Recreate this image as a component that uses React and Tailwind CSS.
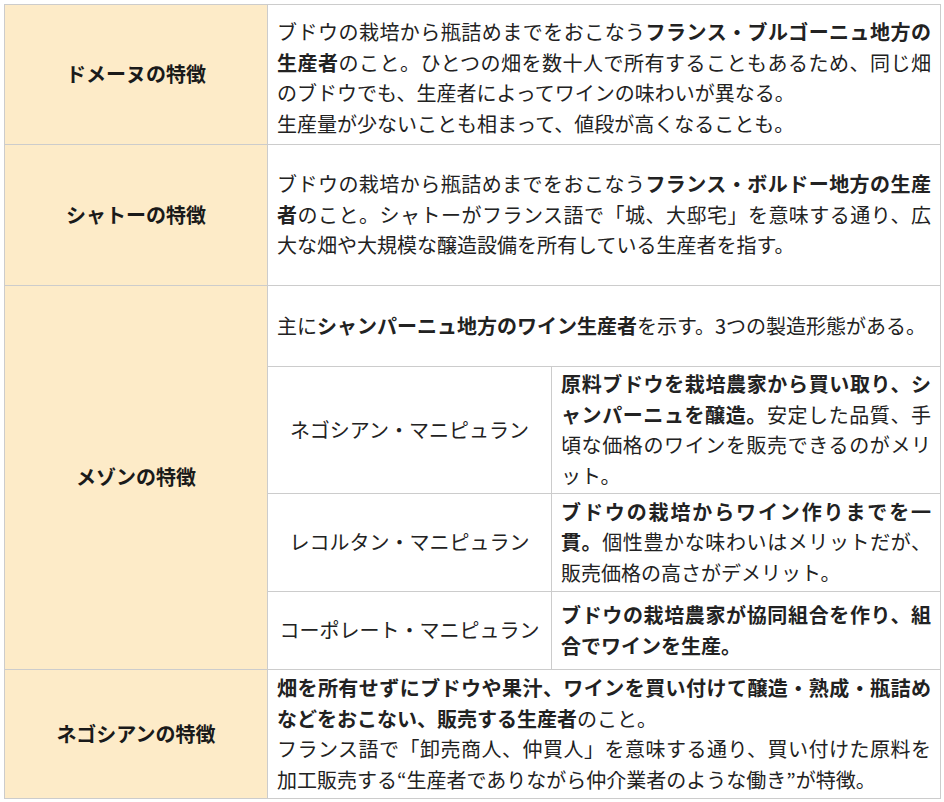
import React from 'react';

const font = { fontFamily: '"Noto Sans CJK JP", "Noto Sans", sans-serif' };

function Label({ children, rowSpan }) {
  return (
    <td
      rowSpan={rowSpan}
      className="border border-[#cccccc] bg-[#fdebc8] text-center align-middle font-bold text-[#1a1a1a]"
    >
      {children}
    </td>
  );
}

function Body({ children, colSpan = 2, center = false, extra = 'py-0.5' }) {
  return (
    <td
      colSpan={colSpan}
      className={`border border-[#cccccc] bg-white px-[9px] align-middle text-[#222222] ${extra} ${center ? 'text-center' : 'text-justify'}`}
    >
      {children}
    </td>
  );
}

export default function App() {
  return (
    <div className="min-h-screen bg-white p-1" style={font}>
      <table className="w-[936px] table-fixed border-collapse text-[20px] leading-[30.5px]">
        <colgroup>
          <col className="w-[263px]" />
          <col className="w-[284px]" />
          <col className="w-[389px]" />
        </colgroup>
        <tbody>
          <tr className="h-[140px]">
            <Label>ドメーヌの特徴</Label>
            <Body extra="pt-[7px] pb-0">
              ブドウの栽培から瓶詰めまでをおこなう<b>フランス・ブルゴーニュ地方の生産者</b>のこと。ひとつの畑を数十人で所有することもあるため、同じ畑のブドウでも、生産者によってワインの味わいが異なる。
              <br />
              生産量が少ないことも相まって、値段が高くなることも。
            </Body>
          </tr>
          <tr className="h-[141px]">
            <Label>シャトーの特徴</Label>
            <Body>
              ブドウの栽培から瓶詰めまでをおこなう<b>フランス・ボルドー地方の生産者</b>のこと。シャトーがフランス語で「城、大邸宅」を意味する通り、広大な畑や大規模な醸造設備を所有している生産者を指す。
            </Body>
          </tr>
          <tr className="h-[81px]">
            <Label rowSpan={4}>メゾンの特徴</Label>
            <Body>
              主に<b>シャンパーニュ地方のワイン生産者</b>を示す。3つの製造形態がある。
            </Body>
          </tr>
          <tr className="h-[126px]">
            <Body colSpan={1} center>ネゴシアン・マニピュラン</Body>
            <Body colSpan={1}>
              <b>原料ブドウを栽培農家から買い取り、シャンパーニュを醸造。</b>安定した品質、手頃な価格のワインを販売できるのがメリット。
            </Body>
          </tr>
          <tr className="h-[98px]">
            <Body colSpan={1} center>レコルタン・マニピュラン</Body>
            <Body colSpan={1}>
              <b>ブドウの栽培からワイン作りまでを一貫。</b>個性豊かな味わいはメリットだが、販売価格の高さがデメリット。
            </Body>
          </tr>
          <tr className="h-[78px]">
            <Body colSpan={1} center>コーポレート・マニピュラン</Body>
            <Body colSpan={1}>
              <b>ブドウの栽培農家が協同組合を作り、組合でワインを生産。</b>
            </Body>
          </tr>
          <tr className="h-[129px]">
            <Label>ネゴシアンの特徴</Label>
            <Body>
              <b>畑を所有せずにブドウや果汁、ワインを買い付けて醸造・熟成・瓶詰めなどをおこない、販売する生産者</b>のこと。
              <br />
              フランス語で「卸売商人、仲買人」を意味する通り、買い付けた原料を加工販売する“生産者でありながら仲介業者のような働き”が特徴。
            </Body>
          </tr>
        </tbody>
      </table>
    </div>
  );
}
